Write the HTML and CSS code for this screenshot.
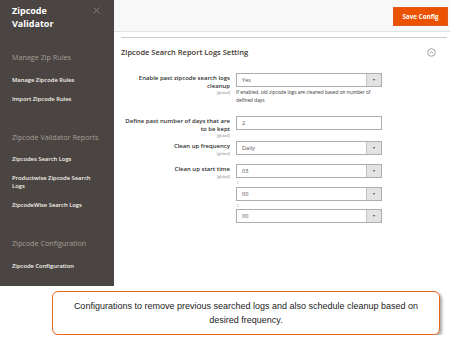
FILE: index.html
```html
<!DOCTYPE html>
<html lang="en">
<head>
    <meta charset="UTF-8">
    <meta name="viewport" content="width=device-width, initial-scale=1.0">
    <title>Zipcode Search Report Logs Setting</title>
    <link rel="stylesheet" href="styles.css">
</head>
<body>
    <div class="page">
        <aside class="menu">
            <div class="menu-top">
                <h2 class="menu-title">Zipcode<br>Validator</h2>
                <svg class="menu-close" width="7" height="7" viewBox="0 0 7 7">
                    <path d="M0.5 0.5 L6.5 6.5 M6.5 0.5 L0.5 6.5" stroke="#8a837f" stroke-width="0.9" fill="none"/>
                </svg>
            </div>
            <div class="menu-group">
                <div class="menu-heading">Manage Zip Rules</div>
                <a class="menu-link">Manage Zipcode Rules</a>
                <a class="menu-link">Import Zipcode Rules</a>
            </div>
            <div class="menu-group">
                <div class="menu-heading">Zipcode Validator Reports</div>
                <a class="menu-link">Zipcodes Search Logs</a>
                <a class="menu-link">Productwise Zipcode Search<br>Logs</a>
                <a class="menu-link">ZipcodeWise Search Logs</a>
            </div>
            <div class="menu-group">
                <div class="menu-heading">Zipcode Configuration</div>
                <a class="menu-link">Zipcode Configuration</a>
            </div>
        </aside>

        <main class="content">
            <div class="page-actions">
                <button class="save-btn">Save Config</button>
            </div>

            <section class="config">
                <div class="config-head">
                    <span class="config-title">Zipcode Search Report Logs Setting</span>
                    <svg class="collapse" width="9" height="9" viewBox="0 0 9 9">
                        <circle cx="4.5" cy="4.5" r="3.8" stroke="#8a8a8a" stroke-width="0.8" fill="none"/>
                        <path d="M2.9 5.2 L4.5 3.6 L6.1 5.2" stroke="#8a8a8a" stroke-width="0.8" fill="none"/>
                    </svg>
                </div>

                <div class="form">
                    <div class="label">Enable past zipcode search logs<br>cleanup<span class="scope">[global]</span></div>
                    <div class="control">
                        <div class="select"><span class="value">Yes</span><span class="arrow">&#9662;</span></div>
                        <p class="note">If enabled, old zipcode logs are cleaned based on number of<br>defined days</p>
                    </div>

                    <div class="label">Define past number of days that are<br>to be kept<span class="scope">[global]</span></div>
                    <div class="control">
                        <div class="input"><span class="value">2</span></div>
                    </div>

                    <div class="label">Clean up frequency<span class="scope">[global]</span></div>
                    <div class="control">
                        <div class="select"><span class="value">Daily</span><span class="arrow">&#9662;</span></div>
                    </div>

                    <div class="label">Clean up start time<span class="scope">[global]</span></div>
                    <div class="control">
                        <div class="select"><span class="value">03</span><span class="arrow">&#9662;</span></div>
                        <div class="colon">:</div>
                        <div class="select"><span class="value">00</span><span class="arrow">&#9662;</span></div>
                        <div class="colon">:</div>
                        <div class="select"><span class="value">00</span><span class="arrow">&#9662;</span></div>
                    </div>
                </div>
            </section>
        </main>
    </div>

    <div class="callout">
        Configurations to remove previous searched logs and also schedule cleanup based on<br>desired frequency.
    </div>
</body>
</html>
```

FILE: styles.css
```css
body {
    margin: 0;
    padding: 0;
    background-color: #fff;
    font-family: "Open Sans", Arial, sans-serif;
    color: #303030;
}

.page {
    display: flex;
    height: 286px;
}

/* left slide-out menu */
.menu {
    width: 102px;
    flex-shrink: 0;
    background-color: #4a4542;
    padding: 4px 0 0 12px;
    display: flex;
    flex-direction: column;
    gap: 29px;
}
.menu-top {
    display: flex;
    justify-content: space-between;
    align-items: flex-start;
    margin-bottom: -7px;
}
.menu-title {
    margin: 0;
    font-size: 9px;
    line-height: 13px;
    font-weight: 700;
    color: #fff;
}
.menu-close {
    margin: 3px 14px 0 0;
}
.menu-group {
    display: flex;
    flex-direction: column;
    gap: 11px;
}
.menu-heading {
    font-size: 7.2px;
    line-height: 10px;
    color: #a79d95;
    margin-bottom: 2.5px;
}
.menu-link {
    font-size: 5.8px;
    line-height: 8px;
    font-weight: 600;
    color: #f7f3eb;
}

/* main area */
.content {
    flex: 1;
    padding: 0 3px 0 0;
}
.page-actions {
    display: flex;
    justify-content: flex-end;
    height: 32px;
    margin-right: -3px;
    padding: 7px 2px 0 0;
    box-sizing: border-box;
    background-color: #f8f8f8;
    border-bottom: 1px solid #e3e3e3;
}
.save-btn {
    width: 55px;
    height: 19px;
    padding: 0;
    border: 1px solid #e3591a;
    background-color: #eb5202;
    color: #fff;
    font-family: "Open Sans", Arial, sans-serif;
    font-size: 6.3px;
    font-weight: 700;
}

.config {
    margin: 5px 0 0 7px;
}
.config-head {
    display: flex;
    justify-content: space-between;
    align-items: center;
    height: 27px;
    border-top: 1px solid #cccccc;
}
.config-title {
    font-size: 7.5px;
    font-weight: 600;
    color: #41362f;
    padding-top: 1px;
}
.collapse {
    margin: 2px 11px 0 0;
}

/* form grid */
.form {
    display: grid;
    grid-template-columns: 108px 146px;
    grid-template-rows: 43px 25px 23px auto;
    column-gap: 6px;
    margin: 8px 0 0 1px;
}
.label {
    text-align: right;
    font-size: 6px;
    line-height: 7.5px;
    font-weight: 600;
    color: #303030;
    padding-top: 2px;
}
.scope {
    display: block;
    font-size: 3.8px;
    line-height: 5px;
    font-weight: 400;
    color: #808080;
}
.control {
    display: flex;
    flex-direction: column;
}
.select, .input {
    display: flex;
    height: 14px;
    box-sizing: border-box;
    border: 1px solid #adadad;
    background-color: #fff;
}
.value {
    flex: 1;
    font-size: 5.6px;
    line-height: 12px;
    padding-left: 5px;
    color: #505050;
}
.arrow {
    width: 14px;
    background-color: #e3e3e3;
    border-left: 1px solid #c2c2c2;
    text-align: center;
    font-size: 4px;
    line-height: 12px;
    color: #514943;
}
.note {
    margin: 2px 0 0;
    font-size: 4.8px;
    line-height: 7.5px;
    color: #303030;
}
.colon {
    font-size: 5px;
    line-height: 8.5px;
    color: #303030;
    padding-left: 1px;
}

/* annotation box below the screenshot */
.callout {
    width: 388px;
    height: 44px;
    box-sizing: border-box;
    margin: 5px 0 0 52px;
    border: 1.5px solid #e8641b;
    border-radius: 6px;
    box-shadow: 2px 2px 3px rgba(0, 0, 0, 0.35);
    display: flex;
    align-items: center;
    justify-content: center;
    text-align: center;
    font-family: "Liberation Sans", Arial, sans-serif;
    font-size: 9px;
    line-height: 14px;
    color: #1a1a1a;
}
```
